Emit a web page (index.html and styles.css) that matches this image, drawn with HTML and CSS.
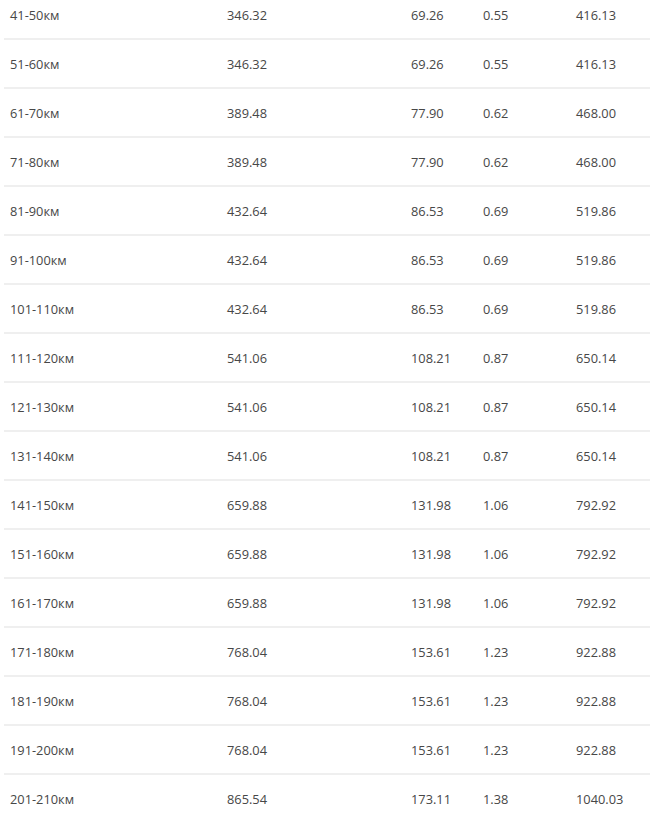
FILE: index.html
```html
<!DOCTYPE html>
<html lang="ru">
<head>
<meta charset="utf-8">
<link rel="stylesheet" href="styles.css">
</head>
<body>
<div class="table">
  <div class="row"><span>41-50км</span><span>346.32</span><span>69.26</span><span>0.55</span><span>416.13</span></div>
  <div class="row"><span>51-60км</span><span>346.32</span><span>69.26</span><span>0.55</span><span>416.13</span></div>
  <div class="row"><span>61-70км</span><span>389.48</span><span>77.90</span><span>0.62</span><span>468.00</span></div>
  <div class="row"><span>71-80км</span><span>389.48</span><span>77.90</span><span>0.62</span><span>468.00</span></div>
  <div class="row"><span>81-90км</span><span>432.64</span><span>86.53</span><span>0.69</span><span>519.86</span></div>
  <div class="row"><span>91-100км</span><span>432.64</span><span>86.53</span><span>0.69</span><span>519.86</span></div>
  <div class="row"><span>101-110км</span><span>432.64</span><span>86.53</span><span>0.69</span><span>519.86</span></div>
  <div class="row"><span>111-120км</span><span>541.06</span><span>108.21</span><span>0.87</span><span>650.14</span></div>
  <div class="row"><span>121-130км</span><span>541.06</span><span>108.21</span><span>0.87</span><span>650.14</span></div>
  <div class="row"><span>131-140км</span><span>541.06</span><span>108.21</span><span>0.87</span><span>650.14</span></div>
  <div class="row"><span>141-150км</span><span>659.88</span><span>131.98</span><span>1.06</span><span>792.92</span></div>
  <div class="row"><span>151-160км</span><span>659.88</span><span>131.98</span><span>1.06</span><span>792.92</span></div>
  <div class="row"><span>161-170км</span><span>659.88</span><span>131.98</span><span>1.06</span><span>792.92</span></div>
  <div class="row"><span>171-180км</span><span>768.04</span><span>153.61</span><span>1.23</span><span>922.88</span></div>
  <div class="row"><span>181-190км</span><span>768.04</span><span>153.61</span><span>1.23</span><span>922.88</span></div>
  <div class="row"><span>191-200км</span><span>768.04</span><span>153.61</span><span>1.23</span><span>922.88</span></div>
  <div class="row"><span>201-210км</span><span>865.54</span><span>173.11</span><span>1.38</span><span>1040.03</span></div>
</div>
</body>
</html>
```
FILE: styles.css
```css
html, body {
  margin: 0;
  padding: 0;
  background: #ffffff;
  overflow: hidden;
}
body {
  font-family: "Open Sans", "Liberation Sans", sans-serif;
  font-size: 12.8px;
  color: #474747;
}
.table {
  margin-top: -9px;
  margin-left: 4px;
}
.row {
  display: grid;
  grid-template-columns: 223px 184px 72px 93px 1fr;
  align-items: center;
  height: 47px;
  border-bottom: 2px solid #efefef;
}
.row span:first-child {
  padding-left: 6px;
}
```
